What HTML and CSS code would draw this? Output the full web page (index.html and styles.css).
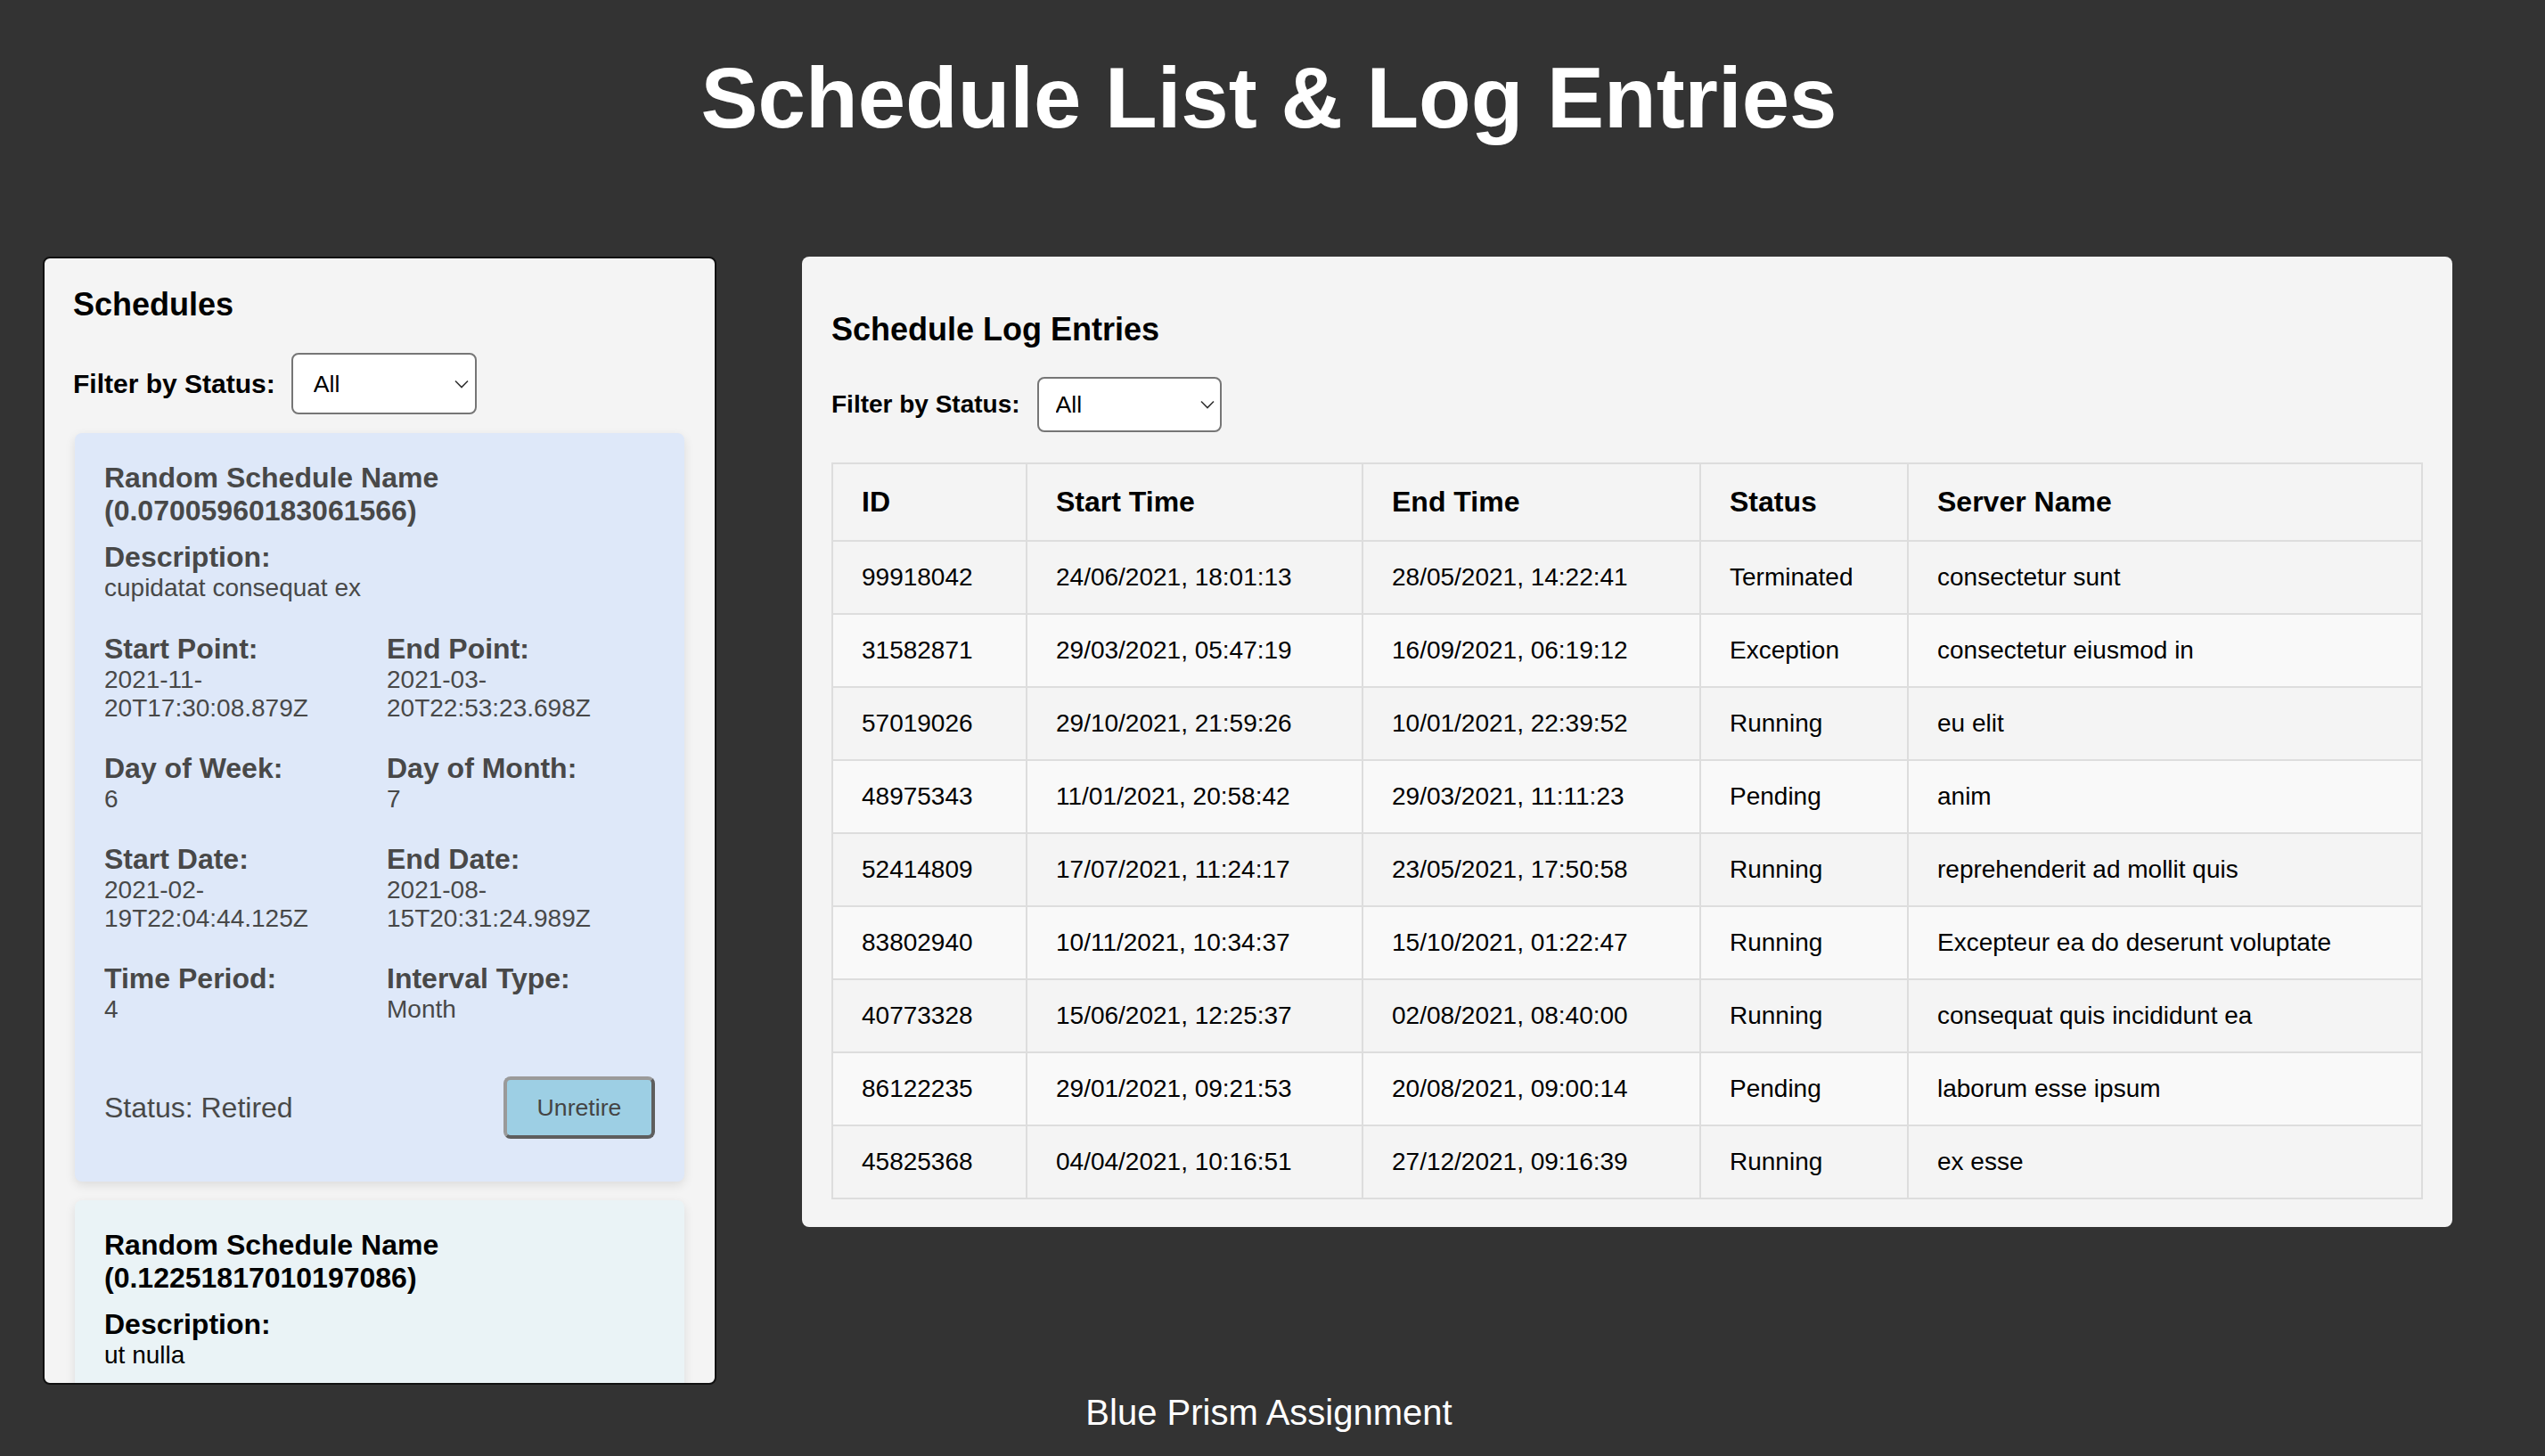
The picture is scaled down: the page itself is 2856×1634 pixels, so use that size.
FILE: index.html
```html
<!DOCTYPE html>
<html lang="en">
<head>
<meta charset="utf-8">
<title>Schedule List &amp; Log Entries</title>
<link rel="stylesheet" href="styles.css">
</head>
<body>
<h1 class="page-title">Schedule List &amp; Log Entries</h1>
<main class="layout">
  <section class="panel schedules-panel">
    <h3 class="panel-title">Schedules</h3>
    <div class="filter filter-left">
      <label class="filter-label" for="schedFilter">Filter by Status:</label>
      <div class="select-wrap">
        <select id="schedFilter" class="select select-left"><option>All</option><option>Active</option><option>Retired</option></select>
        <svg class="chevron" width="16" height="10" viewBox="0 0 16 10"><path d="M1 1.5 L8 8.5 L15 1.5" fill="none" stroke="#333" stroke-width="1.6"/></svg>
      </div>
    </div>
    <div class="card-list">
      <article class="card card-retired">
        <h4 class="card-title">Random Schedule Name (0.07005960183061566)</h4>
        <div class="field field-desc">
          <div class="field-label">Description:</div>
          <div class="field-value">cupidatat consequat ex</div>
        </div>
        <div class="field-grid">
          <div class="field"><div class="field-label">Start Point:</div><div class="field-value">2021-11-20T17:30:08.879Z</div></div>
          <div class="field"><div class="field-label">End Point:</div><div class="field-value">2021-03-20T22:53:23.698Z</div></div>
          <div class="field"><div class="field-label">Day of Week:</div><div class="field-value">6</div></div>
          <div class="field"><div class="field-label">Day of Month:</div><div class="field-value">7</div></div>
          <div class="field"><div class="field-label">Start Date:</div><div class="field-value">2021-02-19T22:04:44.125Z</div></div>
          <div class="field"><div class="field-label">End Date:</div><div class="field-value">2021-08-15T20:31:24.989Z</div></div>
          <div class="field"><div class="field-label">Time Period:</div><div class="field-value">4</div></div>
          <div class="field"><div class="field-label">Interval Type:</div><div class="field-value">Month</div></div>
        </div>
        <div class="status-row">
          <span class="status-text">Status: Retired</span>
          <button class="action-btn" type="button">Unretire</button>
        </div>
      </article>
      <article class="card card-active">
        <h4 class="card-title">Random Schedule Name (0.12251817010197086)</h4>
        <div class="field field-desc">
          <div class="field-label">Description:</div>
          <div class="field-value">ut nulla</div>
        </div>
      </article>
    </div>
  </section>

  <section class="panel logs-panel">
    <h3 class="panel-title logs-title">Schedule Log Entries</h3>
    <div class="filter filter-right">
      <label class="filter-label filter-label-sm" for="logFilter">Filter by Status:</label>
      <div class="select-wrap">
        <select id="logFilter" class="select select-right"><option>All</option><option>Running</option><option>Pending</option><option>Exception</option><option>Terminated</option></select>
        <svg class="chevron chevron-right" width="16" height="10" viewBox="0 0 16 10"><path d="M1 1.5 L8 8.5 L15 1.5" fill="none" stroke="#333" stroke-width="1.6"/></svg>
      </div>
    </div>
    <table class="log-table">
      <colgroup>
        <col class="col-id"><col class="col-start"><col class="col-end"><col class="col-status"><col class="col-server">
      </colgroup>
      <thead>
        <tr><th>ID</th><th>Start Time</th><th>End Time</th><th>Status</th><th>Server Name</th></tr>
      </thead>
      <tbody>
        <tr><td>99918042</td><td>24/06/2021, 18:01:13</td><td>28/05/2021, 14:22:41</td><td>Terminated</td><td>consectetur sunt</td></tr>
        <tr><td>31582871</td><td>29/03/2021, 05:47:19</td><td>16/09/2021, 06:19:12</td><td>Exception</td><td>consectetur eiusmod in</td></tr>
        <tr><td>57019026</td><td>29/10/2021, 21:59:26</td><td>10/01/2021, 22:39:52</td><td>Running</td><td>eu elit</td></tr>
        <tr><td>48975343</td><td>11/01/2021, 20:58:42</td><td>29/03/2021, 11:11:23</td><td>Pending</td><td>anim</td></tr>
        <tr><td>52414809</td><td>17/07/2021, 11:24:17</td><td>23/05/2021, 17:50:58</td><td>Running</td><td>reprehenderit ad mollit quis</td></tr>
        <tr><td>83802940</td><td>10/11/2021, 10:34:37</td><td>15/10/2021, 01:22:47</td><td>Running</td><td>Excepteur ea do deserunt voluptate</td></tr>
        <tr><td>40773328</td><td>15/06/2021, 12:25:37</td><td>02/08/2021, 08:40:00</td><td>Running</td><td>consequat quis incididunt ea</td></tr>
        <tr><td>86122235</td><td>29/01/2021, 09:21:53</td><td>20/08/2021, 09:00:14</td><td>Pending</td><td>laborum esse ipsum</td></tr>
        <tr><td>45825368</td><td>04/04/2021, 10:16:51</td><td>27/12/2021, 09:16:39</td><td>Running</td><td>ex esse</td></tr>
      </tbody>
    </table>
  </section>
</main>
<footer class="footer">Blue Prism Assignment</footer>
</body>
</html>
```

FILE: styles.css
```css
* { box-sizing: border-box; }

html, body {
  margin: 0;
  padding: 0;
  background: #333333;
  font-family: "Liberation Sans", Arial, Helvetica, sans-serif;
  color: #000;
}

.page-title {
  margin: 55px 0 0;
  padding-right: 8px;
  height: 233px;
  font-size: 96px;
  line-height: 110px;
  font-weight: bold;
  color: #ffffff;
  text-align: center;
}

.layout {
  display: flex;
  align-items: flex-start;
  gap: 96px;
  padding-left: 48px;
}

.panel {
  background: #f4f4f4;
  border-radius: 8px;
}

.schedules-panel {
  width: 756px;
  height: 1266px;
  border: 2px solid #111;
  padding: 31px 32px 0;
  overflow: hidden;
  flex: none;
}

.logs-panel {
  width: 1852px;
  padding: 32px 33px 31px;
  flex: none;
}

.panel-title {
  margin: 0;
  font-size: 36px;
  line-height: 41px;
  font-weight: bold;
}

.logs-title {
  margin-top: 29px;
}

.filter {
  display: flex;
  align-items: center;
}

.filter-left {
  margin-top: 34px;
  margin-bottom: 21px;
}

.filter-right {
  margin-top: 33px;
  margin-bottom: 34px;
}

.filter-label {
  font-size: 30px;
  font-weight: bold;
  margin-right: 18px;
}

.filter-label-sm {
  font-size: 28px;
  margin-right: 19px;
}

.select-wrap {
  position: relative;
  display: inline-flex;
}

.select {
  -webkit-appearance: none;
  appearance: none;
  background: #ffffff;
  border: 2px solid #767676;
  border-radius: 8px;
  font-family: "Liberation Sans", Arial, Helvetica, sans-serif;
  font-size: 26.67px;
  color: #000;
  margin: 0;
}

.select-left {
  width: 208px;
  height: 69px;
  padding: 0 0 0 23px;
}

.select-right {
  width: 207px;
  height: 62px;
  padding: 0 0 0 19px;
}

.chevron {
  position: absolute;
  right: 9px;
  top: 50%;
  margin-top: -5px;
  pointer-events: none;
}

.chevron-right {
  right: 8px;
}

.card-list {
  display: flex;
  flex-direction: column;
  gap: 21px;
  padding: 0 2px;
}

.card {
  border-radius: 8px;
  padding: 32px 33px 48px;
  box-shadow: 0 4px 12px rgba(0, 0, 0, 0.1);
}

.card-retired {
  background: #dee8f9;
  color: #484848;
}

.card-active {
  background: #eaf3f6;
  color: #000;
}

.card-title {
  margin: 0;
  font-size: 32px;
  line-height: 37px;
  font-weight: bold;
}

.field-desc {
  margin-top: 15px;
}

.field-label {
  font-size: 32px;
  line-height: 37px;
  font-weight: bold;
}

.field-value {
  font-size: 28px;
  line-height: 32px;
}

.field-grid {
  display: grid;
  grid-template-columns: 1fr 1fr;
  column-gap: 16px;
  row-gap: 33px;
  margin-top: 34px;
}

.status-row {
  display: flex;
  align-items: center;
  justify-content: space-between;
  margin-top: 59px;
}

.status-text {
  font-size: 32px;
}

.action-btn {
  width: 170px;
  height: 70px;
  background: #9dcfe4;
  color: #444;
  font-family: "Liberation Sans", Arial, Helvetica, sans-serif;
  font-size: 26.67px;
  border: 4px solid;
  border-color: #9a9a9a #5e5e5e #5e5e5e #9a9a9a;
  border-radius: 8px;
  padding: 0;
}

.log-table {
  width: 100%;
  border-collapse: collapse;
  table-layout: fixed;
}

.col-id { width: 218px; }
.col-start { width: 377px; }
.col-end { width: 379px; }
.col-status { width: 233px; }

.log-table th,
.log-table td {
  border: 2px solid #dddddd;
  padding: 24px 32px;
  text-align: left;
  white-space: nowrap;
}

.log-table th {
  font-size: 32px;
  line-height: 37px;
  font-weight: bold;
  background: #f4f4f4;
}

.log-table td {
  font-size: 28px;
  line-height: 32px;
  background: #f4f4f4;
}

.log-table tbody tr:nth-child(even) td {
  background: #f9f9f9;
}

.footer {
  margin-top: 8px;
  padding-right: 8px;
  text-align: center;
  color: #ffffff;
  font-size: 40px;
  line-height: 46px;
}
```
